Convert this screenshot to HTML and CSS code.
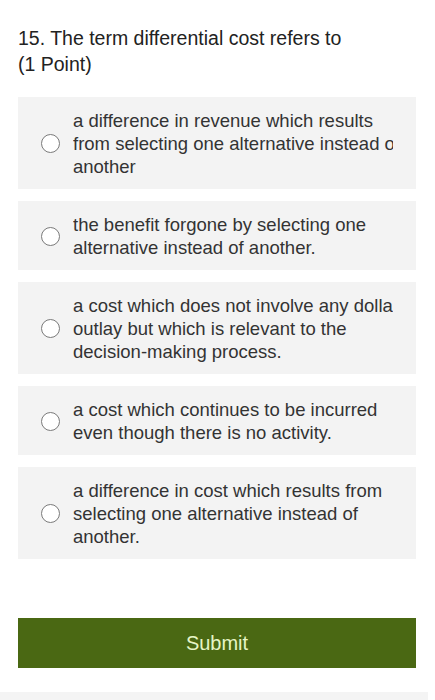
FILE: index.html
```html
<!DOCTYPE html>
<html>
<head>
<meta charset="utf-8">
<link rel="stylesheet" href="styles.css">
</head>
<body>
<div class="page">
  <div class="question">
    <div>15. The term differential cost refers to</div>
    <div>(1 Point)</div>
  </div>
  <div class="options">
    <div class="option">
      <span class="radio"></span>
      <div class="clip"><div class="label">a difference in revenue which results from selecting one alternative instead of another</div></div>
    </div>
    <div class="option">
      <span class="radio"></span>
      <div class="clip"><div class="label">the benefit forgone by selecting one alternative instead of another.</div></div>
    </div>
    <div class="option">
      <span class="radio"></span>
      <div class="clip"><div class="label">a cost which does not involve any dollar outlay but which is relevant to the decision-making process.</div></div>
    </div>
    <div class="option">
      <span class="radio"></span>
      <div class="clip"><div class="label">a cost which continues to be incurred even though there is no activity.</div></div>
    </div>
    <div class="option">
      <span class="radio"></span>
      <div class="clip"><div class="label">a difference in cost which results from selecting one alternative instead of another.</div></div>
    </div>
  </div>
  <button class="submit">Submit</button>
</div>
<div class="footer"></div>
</body>
</html>
```
FILE: styles.css
```css
html, body {
  margin: 0;
  padding: 0;
  background: #ffffff;
}
body {
  font-family: "Liberation Sans", Arial, sans-serif;
  color: #333333;
  width: 435px;
  height: 700px;
  overflow: hidden;
  display: flex;
  flex-direction: column;
}
.page {
  padding: 25px 19px 0 18px;
  flex: 1;
}
.question {
  font-size: 19.5px;
  line-height: 26px;
  color: #222222;
}
.options {
  margin-top: 20px;
  display: flex;
  flex-direction: column;
  gap: 12px;
}
.option {
  background: #f3f3f3;
  display: flex;
  align-items: center;
  padding: 12px 0 11px 23px;
}
.radio {
  flex: none;
  width: 17px;
  height: 17px;
  border: 1.6px solid #7a7a7a;
  border-radius: 50%;
  background: #ffffff;
  margin-right: 13px;
}
.clip {
  width: 320px;
  overflow: hidden;
}
.label {
  width: 340px;
  font-size: 18.5px;
  line-height: 23px;
  color: #333333;
}
.submit {
  display: block;
  width: 100%;
  height: 50px;
  margin-top: 59px;
  border: none;
  background: #4a6813;
  color: #e6f5c6;
  font-family: "Liberation Sans", Arial, sans-serif;
  font-size: 20px;
  padding: 0;
}
.footer {
  height: 8px;
  width: 428px;
  background: #f4f4f4;
}
```
